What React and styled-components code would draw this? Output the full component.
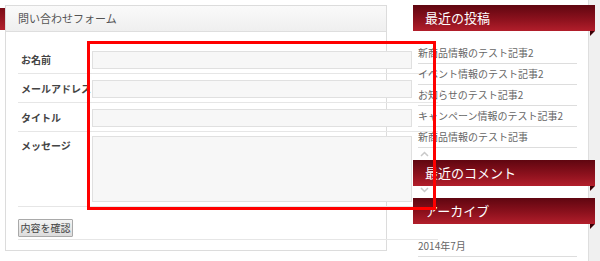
import React from 'react';
import styled, { createGlobalStyle } from 'styled-components';

const GlobalStyle = createGlobalStyle`
  html, body {
    margin: 0;
    padding: 0;
  }
  body {
    font-family: "Noto Sans CJK JP", "Liberation Sans", sans-serif;
    background: #fff;
  }
`;

const Page = styled.div`
  position: relative;
  display: flex;
  align-items: flex-start;
  width: 600px;
  height: 261px;
  padding-top: 5px;
  box-sizing: border-box;
  overflow: hidden;
  background: linear-gradient(
    to right,
    #fff 588px,
    #dedede 588px,
    #dedede 589px,
    #f0f0f0 589px
  );
`;

const EdgeTab = styled.div`
  width: 5px;
  height: 22px;
  margin-top: 3px;
  flex-shrink: 0;
  background: linear-gradient(#7a0c16, #b3212d);
`;

const Panel = styled.section`
  width: 382px;
  height: 246px;
  box-sizing: border-box;
  border: 1px solid #dcdcdc;
  flex-shrink: 0;
`;

const PanelHeader = styled.h2`
  margin: 0;
  height: 25px;
  line-height: 25px;
  padding-left: 12px;
  font-size: 11px;
  font-weight: normal;
  color: #555;
  background: linear-gradient(#fafafa, #efefef);
  border-bottom: 1px solid #dedede;
`;

const Form = styled.form`
  padding: 13px 0 0 12px;
`;

const Row = styled.div`
  display: flex;
  align-items: ${({ $top }) => ($top ? 'flex-start' : 'center')};
  padding: ${({ $top }) => ($top ? '4px 0 4px' : '6px 0 4px')};
  border-bottom: 1px solid #e6e6e6;
  width: 420px;
`;

const Label = styled.label`
  width: 74px;
  flex-shrink: 0;
  padding-left: 3px;
  box-sizing: border-box;
  font-size: 10px;
  font-weight: bold;
  color: #444;
  white-space: nowrap;
  line-height: 18px;
  margin-top: ${({ $top }) => ($top ? '1px' : '0')};
`;

const Field = styled.div`
  width: 320px;
  height: ${({ $h }) => $h}px;
  box-sizing: border-box;
  background: #f7f7f7;
  border: 1px solid #e0e0e0;
  position: relative;
  z-index: 0;
`;

const ButtonRow = styled.div`
  padding: 6px 0 2px;
  border-bottom: 1px solid #e6e6e6;
  width: 420px;
`;

const Button = styled.button`
  height: 18px;
  width: 55px;
  padding: 0;
  font-family: "Noto Sans CJK JP", sans-serif;
  font-size: 10px;
  line-height: 16px;
  color: #444;
  background: linear-gradient(#f4f4f4, #dcdcdc);
  border: 1px solid #a9a9a9;
  border-radius: 1px;
`;

const Sidebar = styled.aside`
  width: 182px;
  margin-left: 26px;
  flex-shrink: 0;
  position: relative;
  z-index: 1;
`;

const Ribbon = styled.h3`
  position: relative;
  margin: 0;
  height: 26px;
  line-height: 25px;
  padding-left: 12px;
  font-size: 13px;
  font-weight: normal;
  color: #fff;
  background: linear-gradient(#5f0610, #8c111d 55%, #b21e2b);

  &::after {
    content: '';
    position: absolute;
    right: 0;
    bottom: -5px;
    border-top: 5px solid #3c0006;
    border-right: 5px solid transparent;
  }
`;

const List = styled.ul`
  list-style: none;
  margin: 12px 0 0 5px;
  padding: 0;
  width: 159px;
`;

const Item = styled.li`
  height: 20px;
  line-height: 20px;
  font-size: 10px;
  color: #666;
  border-bottom: 1px solid #dddddd;
  white-space: nowrap;
`;

const Scroller = styled.div`
  height: 12px;
  padding-left: 7px;
  display: flex;
  align-items: ${({ $down }) => ($down ? 'flex-start' : 'center')};
  padding-top: ${({ $down }) => ($down ? '1px' : '0')};
  box-sizing: border-box;
`;

const Highlight = styled.div`
  position: absolute;
  left: 87px;
  top: 41px;
  width: 349px;
  height: 169px;
  box-sizing: border-box;
  border: 3px solid #ff0000;
  z-index: 5;
  pointer-events: none;
`;

const Chevron = ({ down }) => (
  <svg width="9" height="6" viewBox="0 0 9 6">
    <polyline
      points={down ? '1,1 4.5,4.5 8,1' : '1,5 4.5,1.5 8,5'}
      fill="none"
      stroke="#c9c9c9"
      strokeWidth="1.5"
    />
  </svg>
);

const posts = [
  '新商品情報のテスト記事2',
  'イベント情報のテスト記事2',
  'お知らせのテスト記事2',
  'キャンペーン情報のテスト記事2',
  '新商品情報のテスト記事',
];

const fields = [
  { label: 'お名前' },
  { label: 'メールアドレス' },
  { label: 'タイトル' },
];

export default function App() {
  return (
    <>
      <GlobalStyle />
      <Page>
        <EdgeTab />
        <Panel>
          <PanelHeader>問い合わせフォーム</PanelHeader>
          <Form onSubmit={(e) => e.preventDefault()}>
            {fields.map((f) => (
              <Row key={f.label}>
                <Label>{f.label}</Label>
                <Field $h={18} />
              </Row>
            ))}
            <Row $top>
              <Label $top>メッセージ</Label>
              <Field $h={66} />
            </Row>
            <ButtonRow>
              <Button type="button">内容を確認</Button>
            </ButtonRow>
          </Form>
        </Panel>
        <Sidebar>
          <Ribbon>最近の投稿</Ribbon>
          <List>
            {posts.map((p) => (
              <Item key={p}>{p}</Item>
            ))}
          </List>
          <Scroller>
            <Chevron />
          </Scroller>
          <Ribbon>最近のコメント</Ribbon>
          <Scroller $down>
            <Chevron down />
          </Scroller>
          <Ribbon>アーカイブ</Ribbon>
          <List>
            <Item>2014年7月</Item>
          </List>
        </Sidebar>
        <Highlight />
      </Page>
    </>
  );
}
